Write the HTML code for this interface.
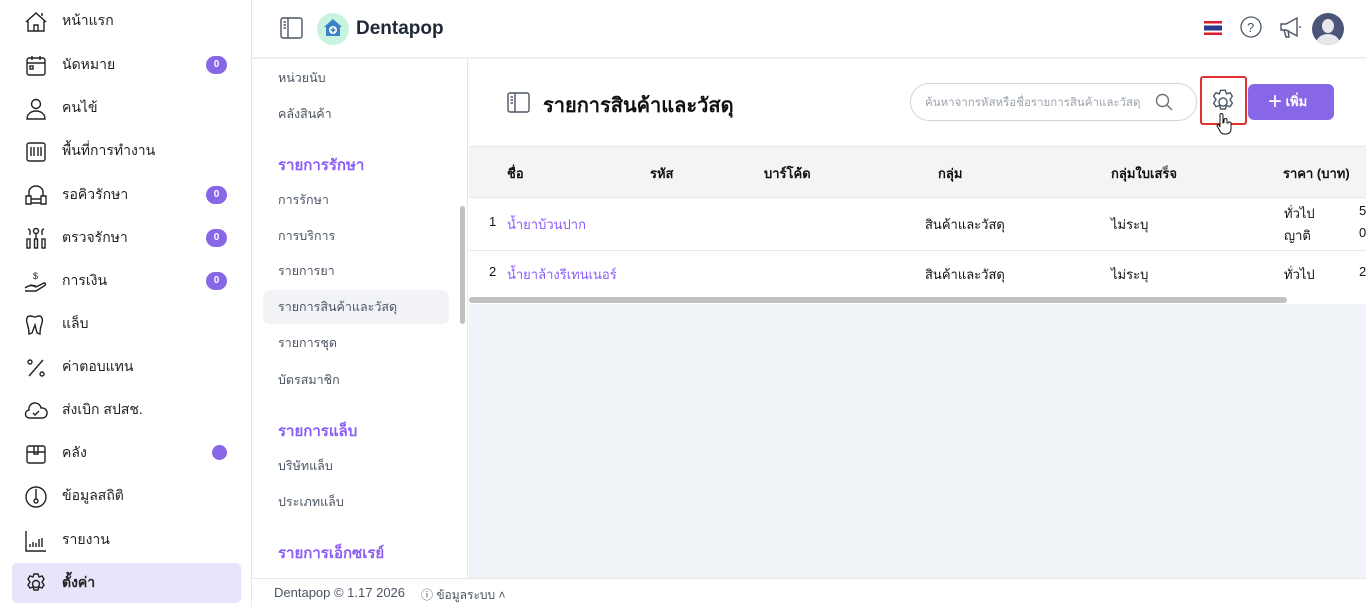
<!DOCTYPE html>
<html><head><meta charset="utf-8"><style>
*{box-sizing:border-box;margin:0;padding:0}
body{width:1366px;height:607px;overflow:hidden;background:#fff;font-family:"Liberation Sans","Noto Sans CJK SC",sans-serif;color:#1f2937;position:relative}
.abs{position:absolute}
.side{left:0;top:0;width:252px;height:607px;border-right:1px solid #e5e7eb;background:#fff}
.item{position:absolute;left:12px;width:229px;height:40px;display:flex;align-items:center}
.item svg{position:absolute;left:12px;top:9px;width:24px;height:24px;fill:none;stroke:#222;stroke-width:1.4}
.item span{position:absolute;left:50px;font-size:14px;color:#222}
.badge{position:absolute;left:194px;width:21px;height:18px;border-radius:9px;background:#8767e6;color:#fff;font-size:10px;font-weight:bold;text-align:center;line-height:18px}
.sub{left:252px;top:59px;width:216px;height:519px;border-right:1px solid #e5e7eb}
.si{position:absolute;left:26px;font-size:12.5px;color:#4b5563}
.sh{position:absolute;left:26px;font-size:15px;font-weight:bold;color:#8b5cf6}
.th{position:absolute;top:163px;font-size:13px;font-weight:bold;color:#111}
.td{position:absolute;font-size:13px;color:#111}
.lnk{color:#8b5cf6}
</style></head><body>
<div class="abs side">
 <div class="item" style="top:1px"><svg viewBox="0 0 24 24"><path d="M2 12L12 3l10 9M4 10v11h16V10M10 21v-6h4v6M18 6V3"/></svg><span>หน้าแรก</span></div>
 <div class="item" style="top:45px"><svg viewBox="0 0 24 24"><rect x="3" y="4" width="18" height="17" rx="2"/><path d="M3 9h18M8 2v4M16 2v4"/><rect x="6" y="12" width="3" height="3"/></svg><span>นัดหมาย</span><div class="badge" style="top:11px">0</div></div>
 <div class="item" style="top:88px"><svg viewBox="0 0 24 24"><circle cx="12" cy="7" r="4.5"/><path d="M3 22c0-5 4-8 9-8s9 3 9 8z"/></svg><span>คนไข้</span></div>
 <div class="item" style="top:131px"><svg viewBox="0 0 24 24"><rect x="3" y="3" width="18" height="18" rx="2"/><path d="M7 7v9M10 7v9M14 7v9M17 7v9"/></svg><span>พื้นที่การทำงาน</span></div>
 <div class="item" style="top:175px"><svg viewBox="0 0 24 24"><path d="M5 12V8a7 6 0 0114 0v4M2 12h5v8H2zM17 12h5v8h-5zM7 15h10v4H7"/></svg><span>รอคิวรักษา</span><div class="badge" style="top:11px">0</div></div>
 <div class="item" style="top:218px"><svg viewBox="0 0 24 24"><circle cx="12" cy="4" r="2.5"/><path d="M4 2a2 2 0 012 2v4M20 2a2 2 0 00-2 2v4M12 7v5"/><rect x="3" y="12" width="3" height="9"/><rect x="10.5" y="12" width="3" height="9"/><rect x="18" y="12" width="3" height="9"/></svg><span>ตรวจรักษา</span><div class="badge" style="top:11px">0</div></div>
 <div class="item" style="top:261px"><svg viewBox="0 0 24 24"><path d="M1 18c4-3 7-3 11-1l8-4c2 0 2 2 0 3l-8 5H1M6 15l6 1"/><text x="9" y="9" font-size="9" fill="#222" stroke="none">$</text></svg><span>การเงิน</span><div class="badge" style="top:11px">0</div></div>
 <div class="item" style="top:304px"><svg viewBox="0 0 24 24"><path d="M6 3c-3 0-4 3-3 7 1 3 2 5 2 11l3-1 3-8 2 8 3 1c0-6 1-8 2-11 1-4 0-7-3-7-2 0-3 1-4 1S8 3 6 3z"/></svg><span>แล็บ</span></div>
 <div class="item" style="top:347px"><svg viewBox="0 0 24 24"><path d="M19 4L5 20"/><circle cx="6" cy="6" r="2"/><circle cx="18" cy="18" r="2"/></svg><span>ค่าตอบแทน</span></div>
 <div class="item" style="top:390px"><svg viewBox="0 0 24 24"><path d="M6 19a4 4 0 01-1-8 6 6 0 0112-2 5 5 0 012 10z"/><path d="M9 14l2 2 4-4"/></svg><span>ส่งเบิก สปสช.</span></div>
 <div class="item" style="top:433px"><svg viewBox="0 0 24 24"><rect x="3" y="4" width="18" height="17" rx="2"/><path d="M3 10h18M10 4v8h4V4"/></svg><span>คลัง</span><div class="badge" style="top:12px;left:200px;width:15px;height:15px"></div></div>
 <div class="item" style="top:476px"><svg viewBox="0 0 24 24"><circle cx="12" cy="12" r="10"/><path d="M12 4v10"/><circle cx="12" cy="16" r="2"/></svg><span>ข้อมูลสถิติ</span></div>
 <div class="item" style="top:520px"><svg viewBox="0 0 24 24"><path d="M2 2v20h20M6 18v-3M9 18v-5M12 18v-4M15 18v-8M18 18v-9"/></svg><span>รายงาน</span></div>
 <div class="item" style="top:563px;background:#e9e3fc;border-radius:5px"><svg viewBox="0 0 24 24"><circle cx="12" cy="12" r="3.5"/><path d="M10 2h4l1 3 3-1 2 3-2 3 2 3-2 3-3-1-1 3h-4l-1-3-3 1-2-3 2-3-2-3 2-3 3 1z"/></svg><span style="font-weight:bold">ตั้งค่า</span></div>
</div>

<div class="abs" style="left:252px;top:0;width:1114px;height:59px;border-bottom:2px solid #eef0f3;background:#fff"></div>
<svg class="abs" style="left:280px;top:17px" width="24" height="23" viewBox="0 0 24 23" fill="none" stroke="#4b5563" stroke-width="1.4"><rect x="1" y="1" width="21" height="20" rx="2"/><path d="M8 1v20M3.5 5h2.5M3.5 8h2.5M3.5 11h2.5"/></svg>
<div class="abs" style="left:317px;top:13px;width:32px;height:32px;border-radius:50%;background:#c7f3df"></div>
<svg class="abs" style="left:322px;top:17px" width="22" height="22" viewBox="0 0 22 22"><path d="M11 2L2 10h2v9h14v-9h2z" fill="#3b82c4"/><circle cx="11" cy="13" r="4" fill="#fff"/><path d="M11 10.5v5M8.5 13h5" stroke="#3b82c4" stroke-width="1.6"/></svg>
<div class="abs" style="left:356px;top:18px;font-size:19px;font-weight:bold;color:#1f2937">Dentapop</div>
<div class="abs" style="left:1204px;top:21px;width:18px;height:14px;background:linear-gradient(#d9202a 0 17%,#fff 17% 33%,#2b3a8f 33% 67%,#fff 67% 83%,#d9202a 83%)"></div>
<svg class="abs" style="left:1240px;top:16px" width="22" height="22" viewBox="0 0 22 22" fill="none" stroke="#4b5563" stroke-width="1.3"><circle cx="11" cy="11" r="10"/><text x="7" y="16" font-size="13" fill="#4b5563" stroke="none" font-family="Liberation Sans">?</text></svg>
<svg class="abs" style="left:1279px;top:16px" width="24" height="24" viewBox="0 0 24 24" fill="none" stroke="#4b5563" stroke-width="1.4"><path d="M2 8h5l11-6v18L7 14H2zM5 14l2 7h3l-1-7M21 10v2"/></svg>
<div class="abs" style="left:1312px;top:13px;width:32px;height:32px;border-radius:50%;background:#4a5578;overflow:hidden"><div class="abs" style="left:10px;top:6px;width:12px;height:14px;border-radius:50%;background:#e5e7eb"></div><div class="abs" style="left:4px;top:21px;width:24px;height:20px;border-radius:50%;background:#e5e7eb"></div></div>

<div class="abs sub">
 <div class="si" style="top:9px">หน่วยนับ</div>
 <div class="si" style="top:45px">คลังสินค้า</div>
 <div class="sh" style="top:94px">รายการรักษา</div>
 <div class="si" style="top:131px">การรักษา</div>
 <div class="si" style="top:167px">การบริการ</div>
 <div class="si" style="top:202px">รายการยา</div>
 <div class="abs" style="left:11px;top:231px;width:186px;height:34px;background:#f1f3f7;border-radius:7px"></div>
 <div class="si" style="top:238px">รายการสินค้าและวัสดุ</div>
 <div class="si" style="top:274px">รายการชุด</div>
 <div class="si" style="top:311px">บัตรสมาชิก</div>
 <div class="sh" style="top:360px">รายการแล็บ</div>
 <div class="si" style="top:397px">บริษัทแล็บ</div>
 <div class="si" style="top:433px">ประเภทแล็บ</div>
 <div class="sh" style="top:482px">รายการเอ็กซเรย์</div>
 <div class="abs" style="left:208px;top:147px;width:5px;height:118px;border-radius:3px;background:#c1c1c1"></div>
</div>

<div class="abs" style="left:469px;top:304px;width:897px;height:274px;background:#f0f4f9"></div>
<svg class="abs" style="left:507px;top:92px" width="24" height="21" viewBox="0 0 24 21" fill="none" stroke="#4b5563" stroke-width="1.4"><rect x="1" y="1" width="21" height="19" rx="2"/><path d="M8 1v19M3.5 5h2.5M3.5 8h2.5M3.5 11h2.5"/></svg>
<div class="abs" style="left:543px;top:89px;font-size:20px;font-weight:bold;color:#111">รายการสินค้าและวัสดุ</div>
<div class="abs" style="left:910px;top:83px;width:287px;height:38px;border:1px solid #d1d5db;border-radius:19px"></div>
<div class="abs" style="left:925px;top:94px;font-size:11.5px;color:#9ca3af">ค้นหาจากรหัสหรือชื่อรายการสินค้าและวัสดุ</div>
<svg class="abs" style="left:1155px;top:93px" width="18" height="18" viewBox="0 0 18 18" fill="none" stroke="#6b7280" stroke-width="1.4"><circle cx="7.5" cy="7.5" r="6"/><path d="M12 12l5 5"/></svg>
<div class="abs" style="left:1200px;top:76px;width:47px;height:49px;border:2px solid #e03131;border-radius:3px"></div>
<svg class="abs" style="left:1209px;top:88px" width="28" height="28" viewBox="0 0 24 24" fill="none" stroke="#4b5563" stroke-width="1.2"><circle cx="12" cy="12" r="3.5"/><path d="M10 2h4l1 3 3-1 2 3-2 3 2 3-2 3-3-1-1 3h-4l-1-3-3 1-2-3 2-3-2-3 2-3 3 1z"/></svg>
<svg class="abs" style="left:1216px;top:113px" width="18" height="22" viewBox="0 0 18 22"><path d="M4 2a1.5 1.5 0 013 0v8l1-.5V7a1.5 1.5 0 013 0v3l1 0a1.5 1.5 0 013 1v5c0 3-2 5-5 5H8c-2 0-3-1-4-3l-3-5c0-1 1-2 2-1l1 2z" fill="#fff" stroke="#111" stroke-width="1"/></svg>
<div class="abs" style="left:1248px;top:84px;width:86px;height:36px;background:#8767e6;border-radius:6px;color:#fff;font-size:13px;font-weight:bold;line-height:36px;padding-left:20px"><span style="font-size:24px;font-weight:normal;vertical-align:-3px">+</span> เพิ่ม</div>

<div class="abs" style="left:469px;top:146px;width:897px;height:52px;background:#f3f4f6;border-top:1px solid #e5e7eb;border-bottom:1px solid #e5e7eb"></div>
<div class="th" style="left:507px">ชื่อ</div><div class="th" style="left:650px">รหัส</div><div class="th" style="left:764px">บาร์โค้ด</div><div class="th" style="left:938px">กลุ่ม</div><div class="th" style="left:1111px">กลุ่มใบเสร็จ</div><div class="th" style="left:1283px">ราคา (บาท)</div>
<div class="abs" style="left:469px;top:250px;width:897px;height:1px;background:#e5e7eb"></div>
<div class="td" style="left:489px;top:214px">1</div><div class="td lnk" style="left:507px;top:214px">น้ำยาบ้วนปาก</div>
<div class="td" style="left:925px;top:214px">สินค้าและวัสดุ</div><div class="td" style="left:1111px;top:214px">ไม่ระบุ</div>
<div class="td" style="left:1284px;top:203px">ทั่วไป</div><div class="td" style="left:1359px;top:203px">5</div>
<div class="td" style="left:1284px;top:225px">ญาติ</div><div class="td" style="left:1359px;top:225px">0</div>
<div class="td" style="left:489px;top:264px">2</div><div class="td lnk" style="left:507px;top:264px">น้ำยาล้างรีเทนเนอร์</div>
<div class="td" style="left:925px;top:264px">สินค้าและวัสดุ</div><div class="td" style="left:1111px;top:264px">ไม่ระบุ</div>
<div class="td" style="left:1284px;top:264px">ทั่วไป</div><div class="td" style="left:1359px;top:264px">2</div>
<div class="abs" style="left:469px;top:297px;width:818px;height:6px;border-radius:3px;background:#c1c1c1"></div>

<div class="abs" style="left:252px;top:578px;width:1114px;height:29px;border-top:1px solid #e5e7eb;background:#fff"></div>
<div class="abs" style="left:274px;top:585px;font-size:13px;color:#4b5563">Dentapop © 1.17 2026</div>
<div class="abs" style="left:421px;top:586px;font-size:12px;color:#4b5563">ⓘ ข้อมูลระบบ ˄</div>
</body></html>
